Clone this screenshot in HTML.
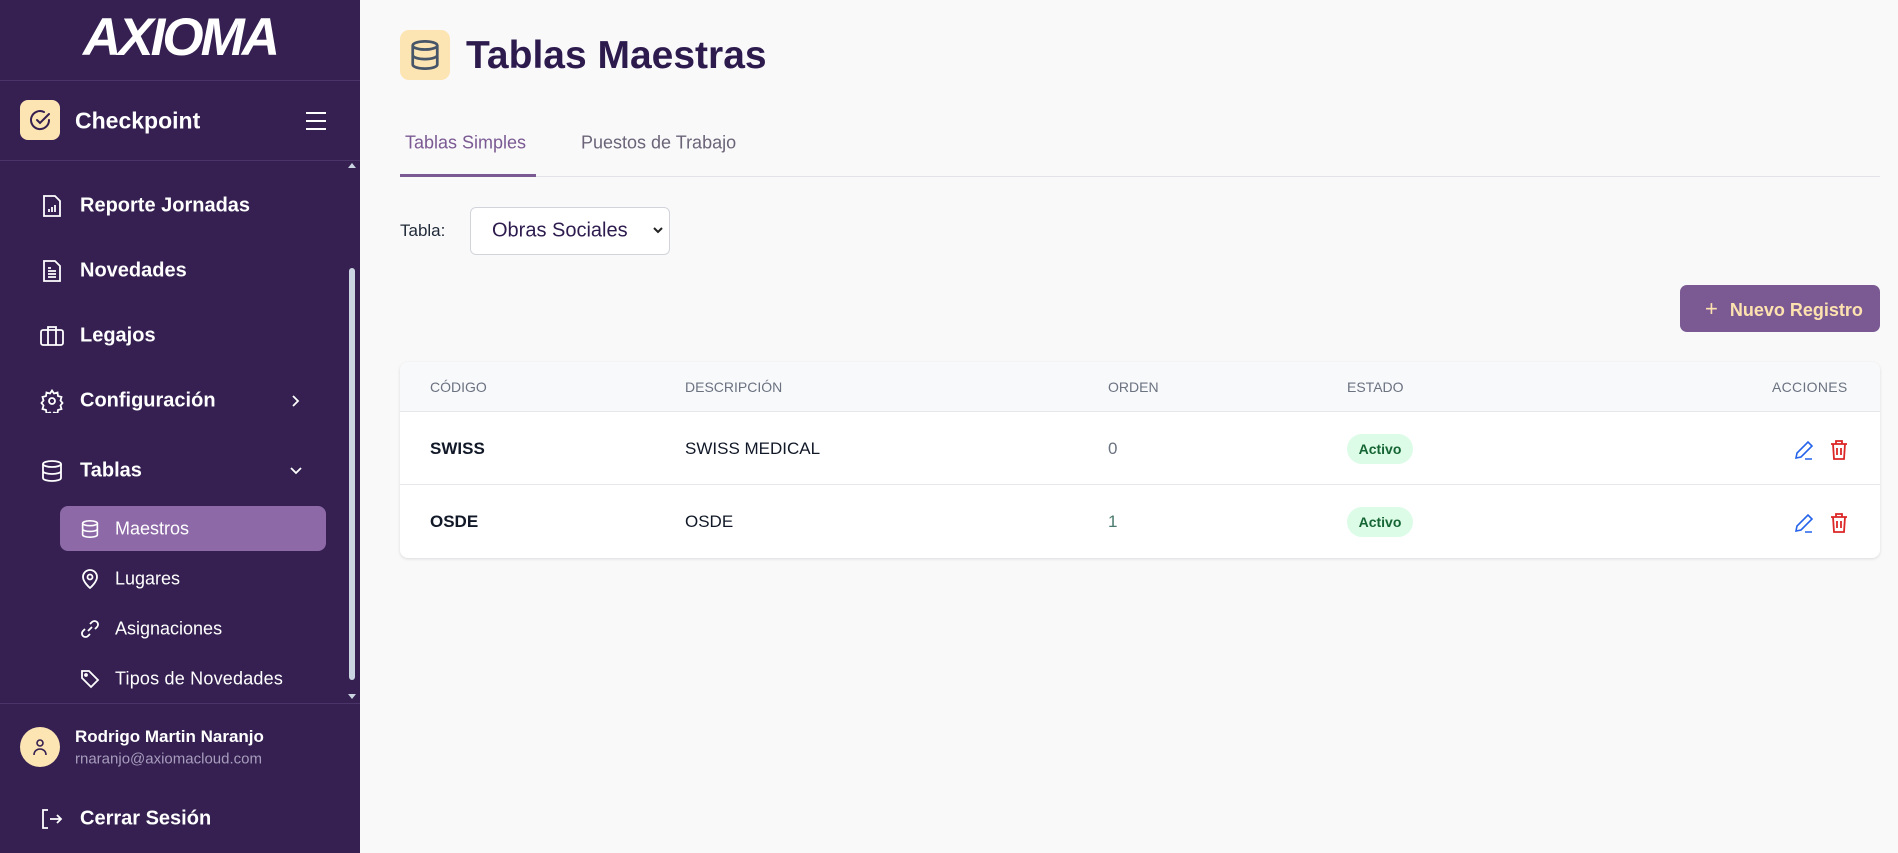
<!DOCTYPE html>
<html><head><meta charset="utf-8"><style>
*{margin:0;padding:0;box-sizing:border-box}
body{width:1898px;height:853px;overflow:hidden;background:#f9f9fa;font-family:"Liberation Sans",sans-serif;position:relative}
.sb{position:absolute;left:0;top:0;width:360px;height:853px;background:#352051}
.a{position:absolute}
.w{color:#fff}
.mi{position:absolute;left:80px;font-size:20px;font-weight:bold;color:#fff;transform:translateY(-50%)}
.ic{position:absolute;transform:translate(-50%,-50%)}
.si{position:absolute;left:115px;font-size:18px;color:#fff;transform:translateY(-50%)}
.th{position:absolute;top:387px;transform:translateY(-50%);font-size:14px;color:#6b7280}
.td{position:absolute;transform:translateY(-50%);font-size:17px;color:#111827}
.badge{position:absolute;left:1347px;width:66px;height:30px;border-radius:15px;background:#dcfce7;color:#166534;font-size:14px;font-weight:bold;text-align:center;line-height:30px;transform:translateY(-50%)}
</style></head><body>
<div class="sb">
  <div class="a" style="left:0;width:360px;top:11px;text-align:center;font-size:53px;font-weight:bold;font-style:italic;letter-spacing:-3px;color:#fff;line-height:54px">AXIOMA</div>
  <div class="a" style="left:0;top:80px;width:360px;height:1px;background:#4a3468"></div>
  <div class="a" style="left:20px;top:100px;width:40px;height:40px;border-radius:8px;background:#fde5b3"></div>
  <svg class="a" style="left:28px;top:108px" width="24" height="24" viewBox="0 0 24 24" fill="none" stroke="#352051" stroke-width="2" stroke-linecap="round"><path d="M21 12a9 9 0 1 1-5-8"/><path d="M9 12l3 3 9-9"/></svg>
  <div class="a w" style="left:75px;top:121px;transform:translateY(-50%);font-size:23px;font-weight:bold">Checkpoint</div>
  <svg class="a" style="left:304px;top:110px" width="24" height="22" viewBox="0 0 24 22" stroke="#fff" stroke-width="2"><path d="M2 3h20M2 11h20M2 19h20"/></svg>
  <div class="a" style="left:0;top:160px;width:360px;height:1px;background:#4a3468"></div>

  <svg class="ic" style="left:52px;top:206px" width="22" height="24" viewBox="0 0 22 24" fill="none" stroke="#fff" stroke-width="1.8"><path d="M3 2h11l5 5v15H3z"/><path d="M8 18v-3M11 18v-5M14 18v-7"/></svg>
  <div class="mi" style="top:206px">Reporte Jornadas</div>
  <svg class="ic" style="left:52px;top:271px" width="22" height="24" viewBox="0 0 22 24" fill="none" stroke="#fff" stroke-width="1.8"><path d="M3 2h11l5 5v15H3z"/><path d="M7 12h8M7 15h8M7 18h8M7 9h3"/></svg>
  <div class="mi" style="top:271px">Novedades</div>
  <svg class="ic" style="left:52px;top:336px" width="24" height="22" viewBox="0 0 24 22" fill="none" stroke="#fff" stroke-width="1.8"><rect x="1" y="5" width="22" height="15" rx="2"/><path d="M8 5V2h8v3M8 5v15M16 5v15"/></svg>
  <div class="mi" style="top:336px">Legajos</div>
  <svg class="ic" style="left:52px;top:401px" width="24" height="24" viewBox="0 0 24 24" fill="none" stroke="#fff" stroke-width="1.8"><circle cx="12" cy="12" r="3"/><path d="M12 1.5l2 3 3.5-1 .5 3.5 3.5 1-1 3.5 2 2.5-2 2.5 1 3.5-3.5 1-.5 3.5-3.5-1-2 3-2-3-3.5 1-.5-3.5-3.5-1 1-3.5-2-2.5 2-2.5-1-3.5 3.5-1 .5-3.5 3.5 1z"/></svg>
  <div class="mi" style="top:401px">Configuración</div>
  <svg class="ic" style="left:296px;top:401px" width="10" height="14" viewBox="0 0 10 14" fill="none" stroke="#fff" stroke-width="1.8"><path d="M2 2l5 5-5 5"/></svg>
  <svg class="ic" style="left:52px;top:471px" width="22" height="24" viewBox="0 0 22 24" fill="none" stroke="#fff" stroke-width="1.8"><ellipse cx="11" cy="5" rx="9" ry="3"/><path d="M2 5v14c0 1.7 4 3 9 3s9-1.3 9-3V5M2 12c0 1.7 4 3 9 3s9-1.3 9-3"/></svg>
  <div class="mi" style="top:471px">Tablas</div>
  <svg class="ic" style="left:296px;top:471px" width="14" height="10" viewBox="0 0 14 10" fill="none" stroke="#fff" stroke-width="1.8"><path d="M2 2l5 5 5-5"/></svg>

  <div class="a" style="left:60px;top:506px;width:266px;height:45px;border-radius:8px;background:#8e69a8"></div>
  <svg class="ic" style="left:90px;top:529px" width="18" height="20" viewBox="0 0 22 24" fill="none" stroke="#fff" stroke-width="2"><ellipse cx="11" cy="5" rx="9" ry="3"/><path d="M2 5v14c0 1.7 4 3 9 3s9-1.3 9-3V5M2 12c0 1.7 4 3 9 3s9-1.3 9-3"/></svg>
  <div class="si" style="top:529px">Maestros</div>
  <svg class="ic" style="left:90px;top:579px" width="18" height="20" viewBox="0 0 18 20" fill="none" stroke="#fff" stroke-width="1.8"><path d="M9 19s7-6 7-11A7 7 0 0 0 2 8c0 5 7 11 7 11z"/><circle cx="9" cy="8" r="2.5"/></svg>
  <div class="si" style="top:579px">Lugares</div>
  <svg class="ic" style="left:90px;top:629px" width="20" height="20" viewBox="0 0 20 20" fill="none" stroke="#fff" stroke-width="1.8"><path d="M8 12l4-4M10 5l2-2a3.5 3.5 0 0 1 5 5l-2 2M10 15l-2 2a3.5 3.5 0 0 1-5-5l2-2"/></svg>
  <div class="si" style="top:629px">Asignaciones</div>
  <svg class="ic" style="left:90px;top:679px" width="20" height="20" viewBox="0 0 20 20" fill="none" stroke="#fff" stroke-width="1.8"><path d="M2 2h7l9 9-7 7-9-9z"/><circle cx="6" cy="6" r="1"/></svg>
  <div class="si" style="top:679px;letter-spacing:0.2px">Tipos de Novedades</div>

  <div class="a" style="left:349px;top:268px;width:6px;height:412px;border-radius:3px;background:#cbd5e1"></div>
  <div class="a" style="left:348px;top:163px;border:4px solid transparent;border-bottom:5px solid #cbd5e1;border-top:0"></div>
  <div class="a" style="left:348px;top:694px;border:4px solid transparent;border-top:5px solid #cbd5e1;border-bottom:0"></div>
  <div class="a" style="left:0;top:703px;width:360px;height:1px;background:#4a3468"></div>

  <div class="a" style="left:20px;top:727px;width:40px;height:40px;border-radius:50%;background:#fde5b3"></div>
  <svg class="a" style="left:32px;top:738px" width="16" height="18" viewBox="0 0 16 18" fill="none" stroke="#352051" stroke-width="1.6"><circle cx="8" cy="5" r="3"/><path d="M2 17c0-4 3-6 6-6s6 2 6 6"/></svg>
  <div class="a w" style="left:75px;top:737px;transform:translateY(-50%);font-size:17px;font-weight:bold">Rodrigo Martin Naranjo</div>
  <div class="a" style="left:75px;top:759px;transform:translateY(-50%);font-size:15px;color:#a89dbd">rnaranjo@axiomacloud.com</div>
  <svg class="ic" style="left:52px;top:819px" width="22" height="22" viewBox="0 0 22 22" fill="none" stroke="#fff" stroke-width="1.8"><path d="M7 2H2v18h5M9 11h11M16 7l4 4-4 4"/></svg>
  <div class="mi" style="top:819px">Cerrar Sesión</div>
</div>

<div class="a" style="left:400px;top:30px;width:50px;height:50px;border-radius:9px;background:#fde5b3"></div>
<svg class="a" style="left:410px;top:38px" width="30" height="34" viewBox="0 0 22 24" fill="none" stroke="#475569" stroke-width="2"><ellipse cx="11" cy="5" rx="9" ry="3"/><path d="M2 5v14c0 1.7 4 3 9 3s9-1.3 9-3V5M2 12c0 1.7 4 3 9 3s9-1.3 9-3"/></svg>
<div class="a" style="left:466px;top:56px;transform:translateY(-50%);font-size:39px;font-weight:bold;color:#2d1b4e">Tablas Maestras</div>

<div class="a" style="left:405px;top:143px;transform:translateY(-50%);font-size:18px;color:#7b5a93">Tablas Simples</div>
<div class="a" style="left:581px;top:143px;transform:translateY(-50%);font-size:18px;color:#6b6478">Puestos de Trabajo</div>
<div class="a" style="left:400px;top:176px;width:1480px;height:1px;background:#e2e2e8"></div>
<div class="a" style="left:400px;top:174px;width:136px;height:3px;background:#7b5a93"></div>

<div class="a" style="left:400px;top:231px;transform:translateY(-50%);font-size:17px;color:#1f2937">Tabla:</div>
<div class="a" style="left:470px;top:207px;width:200px;height:48px;border:1px solid #d1d5db;border-radius:6px;background:#fff"></div>
<div class="a" style="left:492px;top:231px;transform:translateY(-50%);font-size:20px;color:#2d1b4e">Obras Sociales</div>
<svg class="a" style="left:653px;top:227px" width="10" height="8" viewBox="0 0 10 8" fill="none" stroke="#222" stroke-width="2"><path d="M1 1l4 4 4-4"/></svg>

<div class="a" style="left:1680px;top:285px;width:200px;height:47px;border-radius:7px;background:#7b5a93"></div>
<div class="a" style="left:1705px;top:309px;transform:translateY(-50%);font-size:18px;font-weight:bold;color:#fde2b0"><span style="font-weight:normal;font-size:22px;margin-right:12px">+</span>Nuevo Registro</div>

<div class="a" style="left:400px;top:362px;width:1480px;height:196px;background:#fff;border-radius:8px;box-shadow:0 1px 3px rgba(0,0,0,.12);overflow:hidden">
  <div style="height:50px;background:#f8f9fb;border-bottom:1px solid #e5e7eb"></div>
  <div style="height:73px;border-bottom:1px solid #e5e7eb"></div>
</div>
<div class="th" style="left:430px">CÓDIGO</div>
<div class="th" style="left:685px">DESCRIPCIÓN</div>
<div class="th" style="left:1108px">ORDEN</div>
<div class="th" style="left:1347px">ESTADO</div>
<div class="th" style="left:1772px;letter-spacing:0.3px">ACCIONES</div>

<div class="td" style="left:430px;top:449px;font-weight:bold">SWISS</div>
<div class="td" style="left:685px;top:449px">SWISS MEDICAL</div>
<div class="td" style="left:1108px;top:449px;color:#6b7280">0</div>
<div class="badge" style="top:449px">Activo</div>
<div class="td" style="left:430px;top:522px;font-weight:bold">OSDE</div>
<div class="td" style="left:685px;top:522px">OSDE</div>
<div class="td" style="left:1108px;top:522px;color:#4b7a6e">1</div>
<div class="badge" style="top:522px">Activo</div>

<svg class="a" style="left:1794px;top:440px" width="20" height="20" viewBox="0 0 20 20" fill="none" stroke="#2563eb" stroke-width="1.6"><path d="M2 18l1-5L14 2l4 4L7 17z M11 19h7"/></svg>
<svg class="a" style="left:1830px;top:440px" width="18" height="20" viewBox="0 0 18 20" fill="none" stroke="#dc2626" stroke-width="1.8"><path d="M1 4h16M6 4V1h6v3M3 4l1 15h10l1-15M7 8v7M11 8v7"/></svg>
<svg class="a" style="left:1794px;top:513px" width="20" height="20" viewBox="0 0 20 20" fill="none" stroke="#2563eb" stroke-width="1.6"><path d="M2 18l1-5L14 2l4 4L7 17z M11 19h7"/></svg>
<svg class="a" style="left:1830px;top:513px" width="18" height="20" viewBox="0 0 18 20" fill="none" stroke="#dc2626" stroke-width="1.8"><path d="M1 4h16M6 4V1h6v3M3 4l1 15h10l1-15M7 8v7M11 8v7"/></svg>
</body></html>
